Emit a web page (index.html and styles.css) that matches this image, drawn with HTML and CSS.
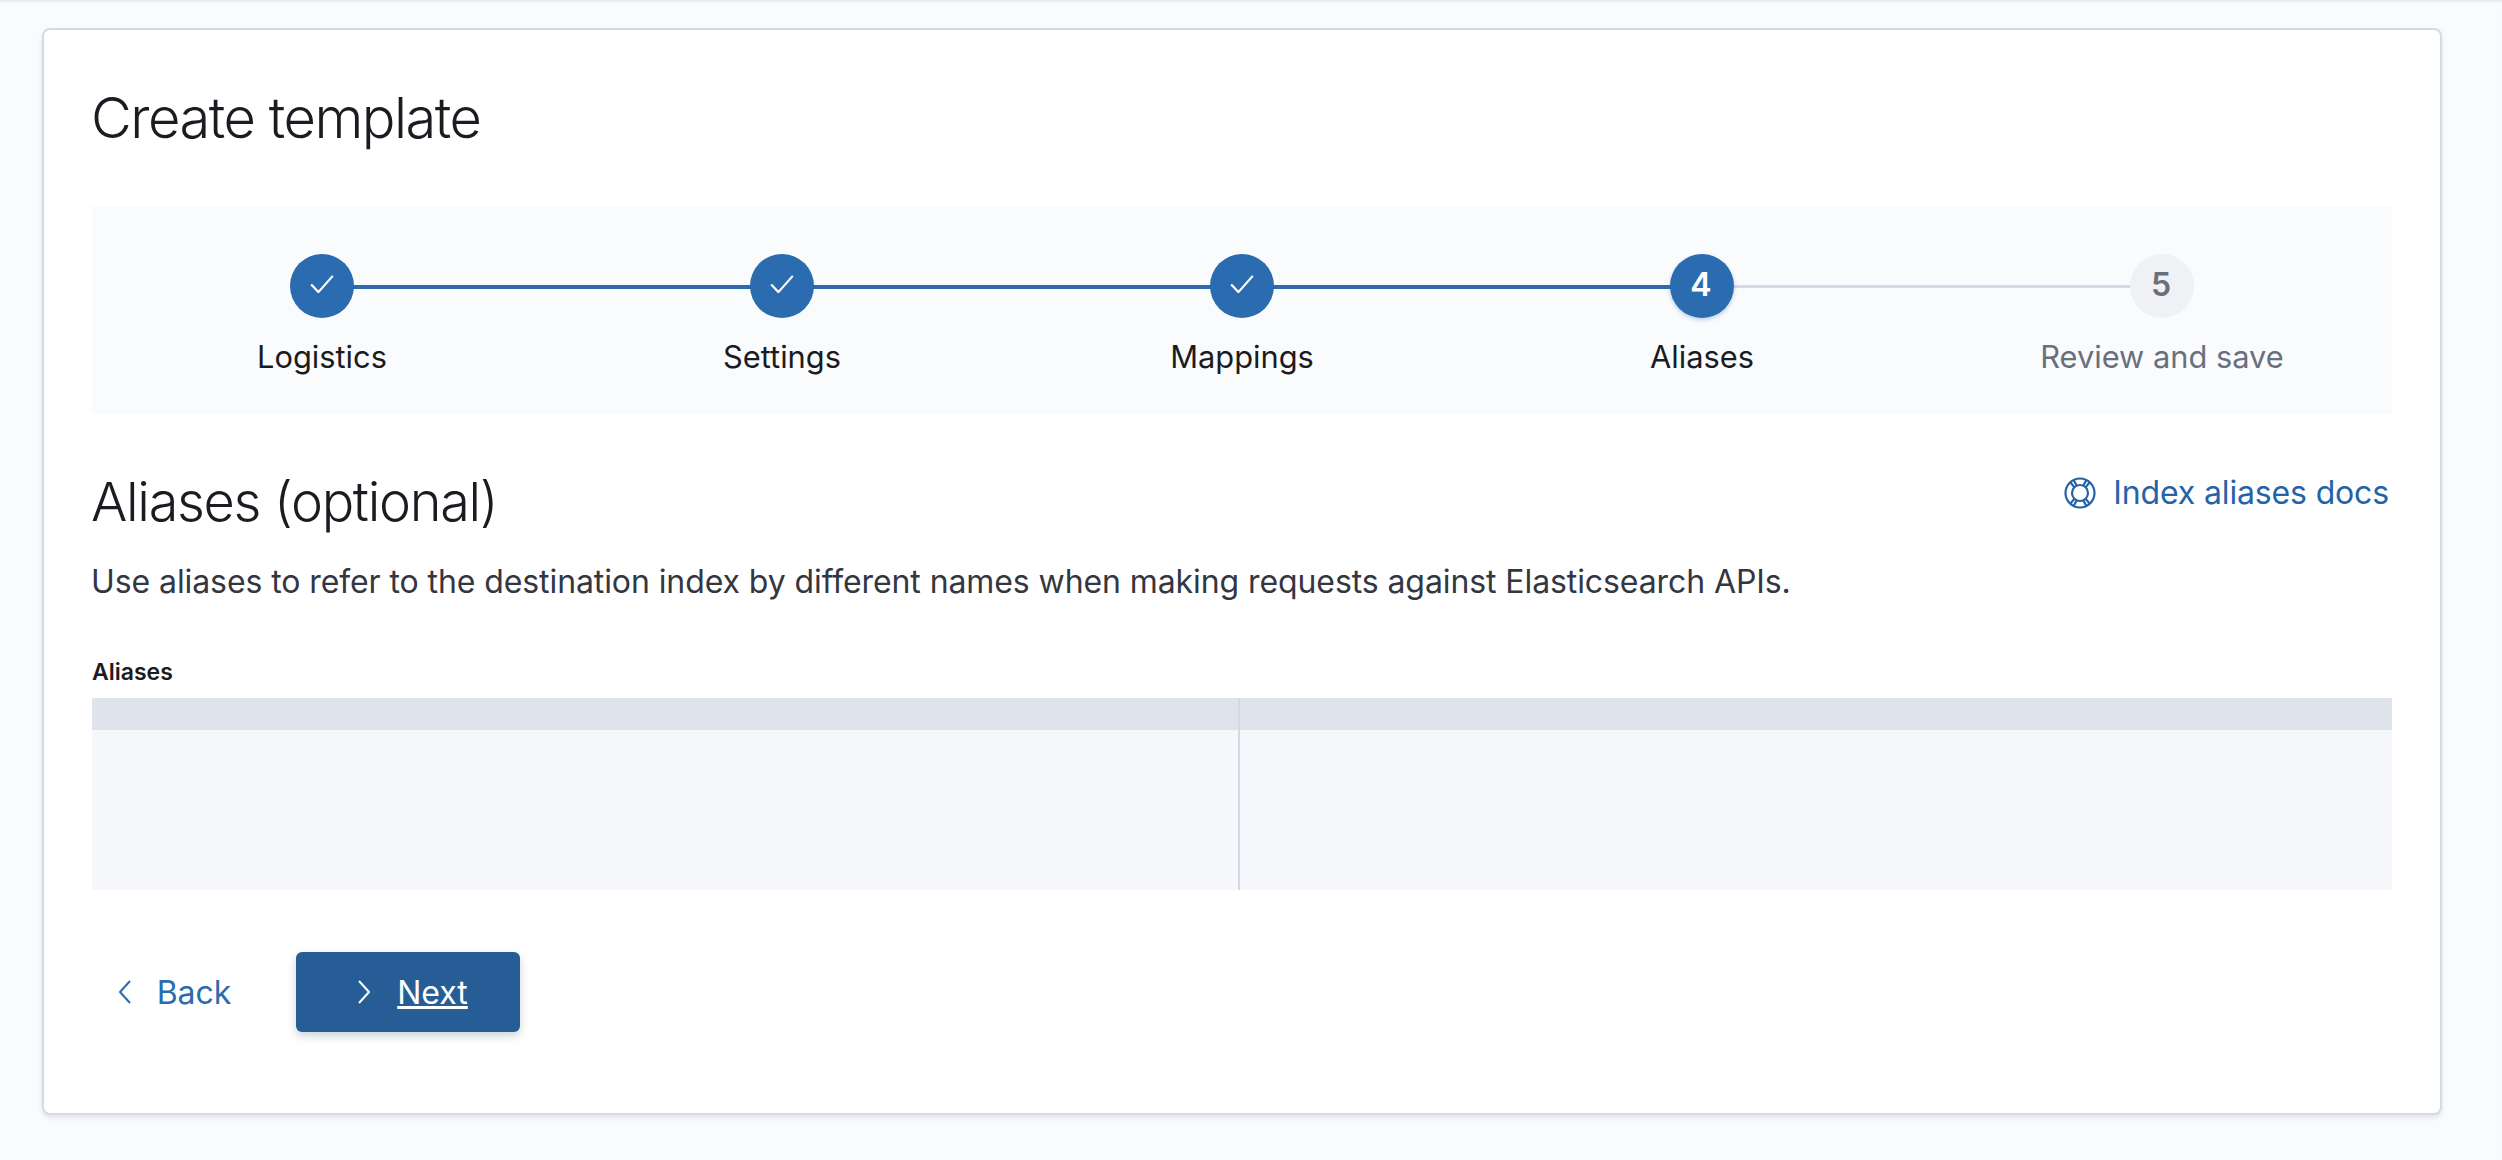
FILE: index.html
```html
<!DOCTYPE html>
<html lang="en">

<head>
    <meta charset="UTF-8">
    <meta name="viewport" content="width=device-width, initial-scale=1.0">
    <title>Create template</title>
    <link rel="stylesheet" href="styles.css">
</head>

<body>
    <main class="card">
        <h1 class="page-title">Create template</h1>

        <ol class="steps">
            <li class="step step-done">
                <span class="step-circle">
                    <svg class="check" viewBox="0 0 26 20"><path d="M1 10.5 L9 19 L25 1"/></svg>
                </span>
                <span class="step-label">Logistics</span>
            </li>
            <li class="step step-done">
                <span class="step-circle">
                    <svg class="check" viewBox="0 0 26 20"><path d="M1 10.5 L9 19 L25 1"/></svg>
                </span>
                <span class="step-label">Settings</span>
            </li>
            <li class="step step-done">
                <span class="step-circle">
                    <svg class="check" viewBox="0 0 26 20"><path d="M1 10.5 L9 19 L25 1"/></svg>
                </span>
                <span class="step-label">Mappings</span>
            </li>
            <li class="step step-current">
                <span class="step-circle"><span class="step-num">4</span></span>
                <span class="step-label">Aliases</span>
            </li>
            <li class="step step-todo">
                <span class="step-circle"><span class="step-num">5</span></span>
                <span class="step-label">Review and save</span>
            </li>
        </ol>

        <div class="section-head">
            <h2 class="section-title">Aliases (optional)</h2>
            <a class="docs-link" href="#">
                <svg class="docs-icon" viewBox="0 0 32 32">
                    <circle cx="16" cy="16" r="14.5"/>
                    <circle cx="16" cy="16" r="8"/>
                    <path d="M6 4.8 L10.4 10.4 M26 4.8 L21.6 10.4 M6 27.2 L10.4 21.6 M26 27.2 L21.6 21.6 M9.5 3 L12.8 8.6 M22.5 3 L19.2 8.6 M9.5 29 L12.8 23.4 M22.5 29 L19.2 23.4"/>
                </svg>
                <span>Index aliases docs</span>
            </a>
        </div>

        <p class="section-text">Use aliases to refer to the destination index by different names when making requests against Elasticsearch APIs.</p>

        <div class="field-label">Aliases</div>
        <div class="editor">
            <div class="editor-col editor-left">
                <div class="editor-head"></div>
            </div>
            <div class="editor-col editor-right">
                <div class="editor-head"></div>
            </div>
        </div>

        <div class="actions">
            <a class="btn btn-back" href="#">
                <svg class="chevron" viewBox="0 0 12 24"><path d="M11 1 L1 12 L11 23"/></svg>
                <span>Back</span>
            </a>
            <a class="btn btn-next" href="#">
                <svg class="chevron" viewBox="0 0 12 24"><path d="M1 1 L11 12 L1 23"/></svg>
                <span class="btn-text">Next</span>
            </a>
        </div>
    </main>
</body>

</html>
```

FILE: styles.css
```css
* {
    padding: 0;
    margin: 0;
    box-sizing: border-box;
}

body {
    background-color: #fafbfd;
    font-family: "Inter", "Liberation Sans", sans-serif;
    color: #1a1c21;
    height: 1160px;
    padding: 28px 60px 0 42px;
    box-shadow: inset 0 3px 3px -2px #d9dee8;
    overflow: hidden;
}

.card {
    background-color: white;
    border: 2px solid #d3dae6;
    border-radius: 8px;
    box-shadow: 0 3px 4px rgba(152, 162, 179, 0.25);
    padding: 48px;
    padding-bottom: 81px;
}

.page-title {
    font-size: 56px;
    font-weight: 300;
    letter-spacing: -1.5px;
    line-height: 80px;
    margin: 0 0 48px -1px;
}

/* steps */
.steps {
    list-style: none;
    display: grid;
    grid-template-columns: repeat(5, 1fr);
    background-color: #fafbfd;
    padding: 48px 0 38px;
}

.step {
    position: relative;
    display: flex;
    flex-direction: column;
    align-items: center;
}

.step::before {
    content: "";
    position: absolute;
    top: 31px;
    left: 50%;
    width: 100%;
    height: 4px;
    background-color: #2b6cb0;
}

.step-current::before {
    top: 31px;
    height: 3px;
    background-color: #d3dae6;
}

.step-todo::before {
    display: none;
}

.step-circle {
    position: relative;
    width: 64px;
    height: 64px;
    border-radius: 50%;
    background-color: #2b6cb0;
    color: white;
    font-size: 32px;
    font-weight: 600;
    display: flex;
    justify-content: center;
    align-items: center;
}

.step-num {
    margin: -3px 2px 0 0;
}

.step-current .step-circle {
    box-shadow: 0 2px 4px rgba(43, 108, 176, 0.3);
}

.step-todo .step-circle {
    background-color: #f0f1f4;
    color: #69707d;
}

.check {
    width: 24px;
    height: 18px;
    fill: none;
    stroke: white;
    stroke-width: 2.4;
    margin-top: -4px;
}

.step-label {
    font-size: 30.8px;
    line-height: 38px;
    margin-top: 20px;
}

.step-todo .step-label {
    color: #69707d;
}

/* section */
.section-head {
    display: flex;
    justify-content: space-between;
    align-items: flex-start;
    margin-top: 56px;
}

.section-title {
    font-size: 54px;
    font-weight: 300;
    letter-spacing: -1.3px;
    line-height: 64px;
    margin-left: -1px;
}

.docs-link {
    display: flex;
    align-items: center;
    gap: 17px;
    color: #2563a8;
    font-size: 32px;
    letter-spacing: -0.15px;
    line-height: 40px;
    text-decoration: none;
    padding: 3px 3px 0 0;
}

.docs-icon {
    width: 32px;
    height: 32px;
    fill: none;
    stroke: #2563a8;
    stroke-width: 2.2;
}

.section-text {
    font-size: 32px;
    letter-spacing: -0.09px;
    line-height: 40px;
    color: #343741;
    margin: 28px 0 0 -1px;
}

.field-label {
    font-size: 23px;
    font-weight: 600;
    line-height: 32px;
    margin-top: 54px;
}

/* editor placeholder */
.editor {
    display: grid;
    grid-template-columns: 1148px 1fr;
    height: 192px;
    margin-top: 10px;
    background-color: #f5f7fa;
}

.editor-left {
    border-right: 2px solid #d3dae6;
}

.editor-head {
    height: 32px;
    background-color: #dfe3eb;
}

/* buttons */
.actions {
    display: flex;
    align-items: center;
    gap: 24px;
    margin-top: 62px;
}

.btn {
    display: flex;
    justify-content: center;
    align-items: center;
    height: 80px;
    width: 224px;
    border-radius: 6px;
    font-size: 32px;
    text-decoration: none;
}

.chevron {
    width: 12px;
    height: 24px;
    fill: none;
    stroke-width: 2;
}

.btn-back {
    width: 180px;
    gap: 26px;
    color: #2b6cb0;
    padding-right: 14px;
}

.btn-back .chevron {
    stroke: #2b6cb0;
}

.btn-next {
    gap: 27px;
    color: white;
    background-color: #265d97;
    box-shadow: 0 4px 8px rgba(65, 78, 101, 0.25);
    padding-left: 10px;
}

.btn-next .chevron {
    stroke: white;
}

.btn-text {
    text-decoration: underline;
}
```
